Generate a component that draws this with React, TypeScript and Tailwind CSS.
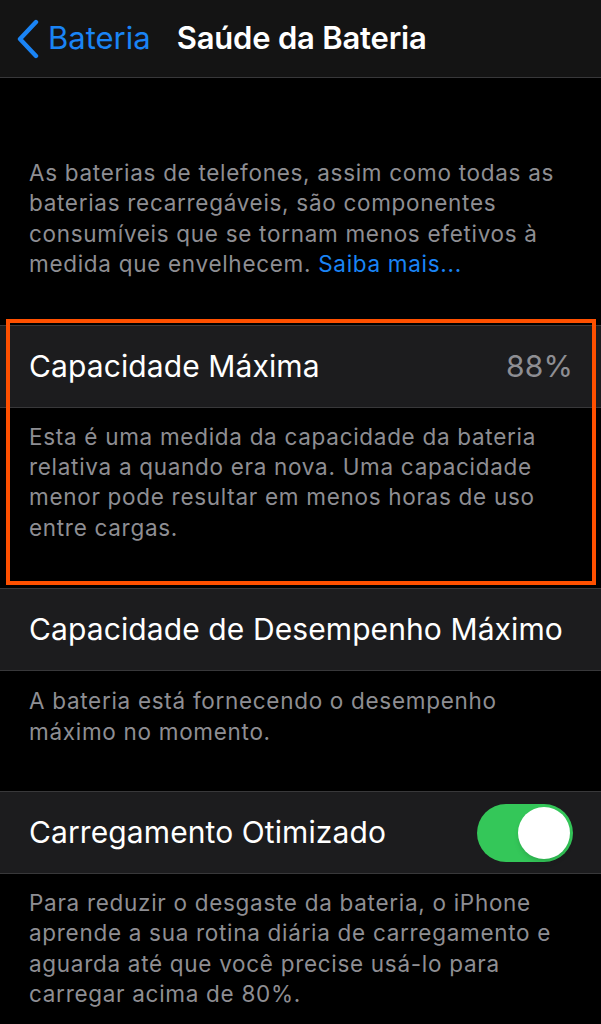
import React from "react";

const font = { fontFamily: "Inter, 'Noto Sans', sans-serif" };

function Row({ children }: { children: React.ReactNode }) {
  return (
    <div className="h-[83px] border-y border-[#38383a] bg-[#1c1c1e] pl-[29px] pr-[28px] flex items-center justify-between text-[30px] text-white tracking-[0.1px]">
      {children}
    </div>
  );
}

function Note({ lines, pt, pb }: { lines: React.ReactNode[]; pt: string; pb: string }) {
  return (
    <div className={`px-[29px] text-[22.5px] leading-[30.4px] text-[#8e8e93] tracking-[0.7px] whitespace-nowrap ${pt} ${pb}`}>
      {lines.map((l, i) => (
        <div key={i}>{l}</div>
      ))}
    </div>
  );
}

export default function App() {
  return (
    <div className="w-[601px] h-[1024px] bg-black overflow-hidden" style={font}>
      <div className="h-[78px] bg-[#141414] border-b border-[#38383a] flex items-center">
        <div className="flex items-center pl-[15px] text-[#1a84f5]">
          <svg width="24" height="40" viewBox="0 0 24 40" fill="none">
            <path d="M21 3 L5 20 L21 37" stroke="#1a84f5" strokeWidth="4.4" strokeLinecap="round" strokeLinejoin="round" />
          </svg>
          <span className="ml-[9px] text-[31px] tracking-[0px]">Bateria</span>
        </div>
        <span className="ml-[26px] text-[31px] font-semibold text-white tracking-[-0.2px]">Saúde da Bateria</span>
      </div>

      <Note
        pt="pt-[80px]"
        pb="pb-[45px]"
        lines={[
          "As baterias de telefones, assim como todas as",
          "baterias recarregáveis, são componentes",
          "consumíveis que se tornam menos efetivos à",
          <>
            medida que envelhecem. <span className="text-[#1a84f5]">Saiba mais...</span>
          </>,
        ]}
      />

      <div className="relative">
        <Row>
          <span>Capacidade Máxima</span>
          <span className="text-[#8e8e93]">88%</span>
        </Row>
        <Note
          pt="pt-[14px]"
          pb="pb-[45px]"
          lines={[
            "Esta é uma medida da capacidade da bateria",
            "relativa a quando era nova. Uma capacidade",
            "menor pode resultar em menos horas de uso",
            "entre cargas.",
          ]}
        />
        <div className="absolute top-[-6px] bottom-[3px] left-[6px] right-[5px] border-4 border-[#ff5000] pointer-events-none" />
      </div>

      <Row>
        <span>Capacidade de Desempenho Máximo</span>
      </Row>
      <Note
        pt="pt-[15px]"
        pb="pb-[44px]"
        lines={["A bateria está fornecendo o desempenho", "máximo no momento."]}
      />

      <Row>
        <span>Carregamento Otimizado</span>
        <div className="w-[96px] h-[58px] rounded-full bg-[#34c759] relative">
          <div className="absolute right-[3px] top-[3px] w-[52px] h-[52px] rounded-full bg-white shadow-md" />
        </div>
      </Row>
      <Note
        pt="pt-[14px]"
        pb="pb-[20px]"
        lines={[
          "Para reduzir o desgaste da bateria, o iPhone",
          "aprende a sua rotina diária de carregamento e",
          "aguarda até que você precise usá-lo para",
          "carregar acima de 80%.",
        ]}
      />
    </div>
  );
}
